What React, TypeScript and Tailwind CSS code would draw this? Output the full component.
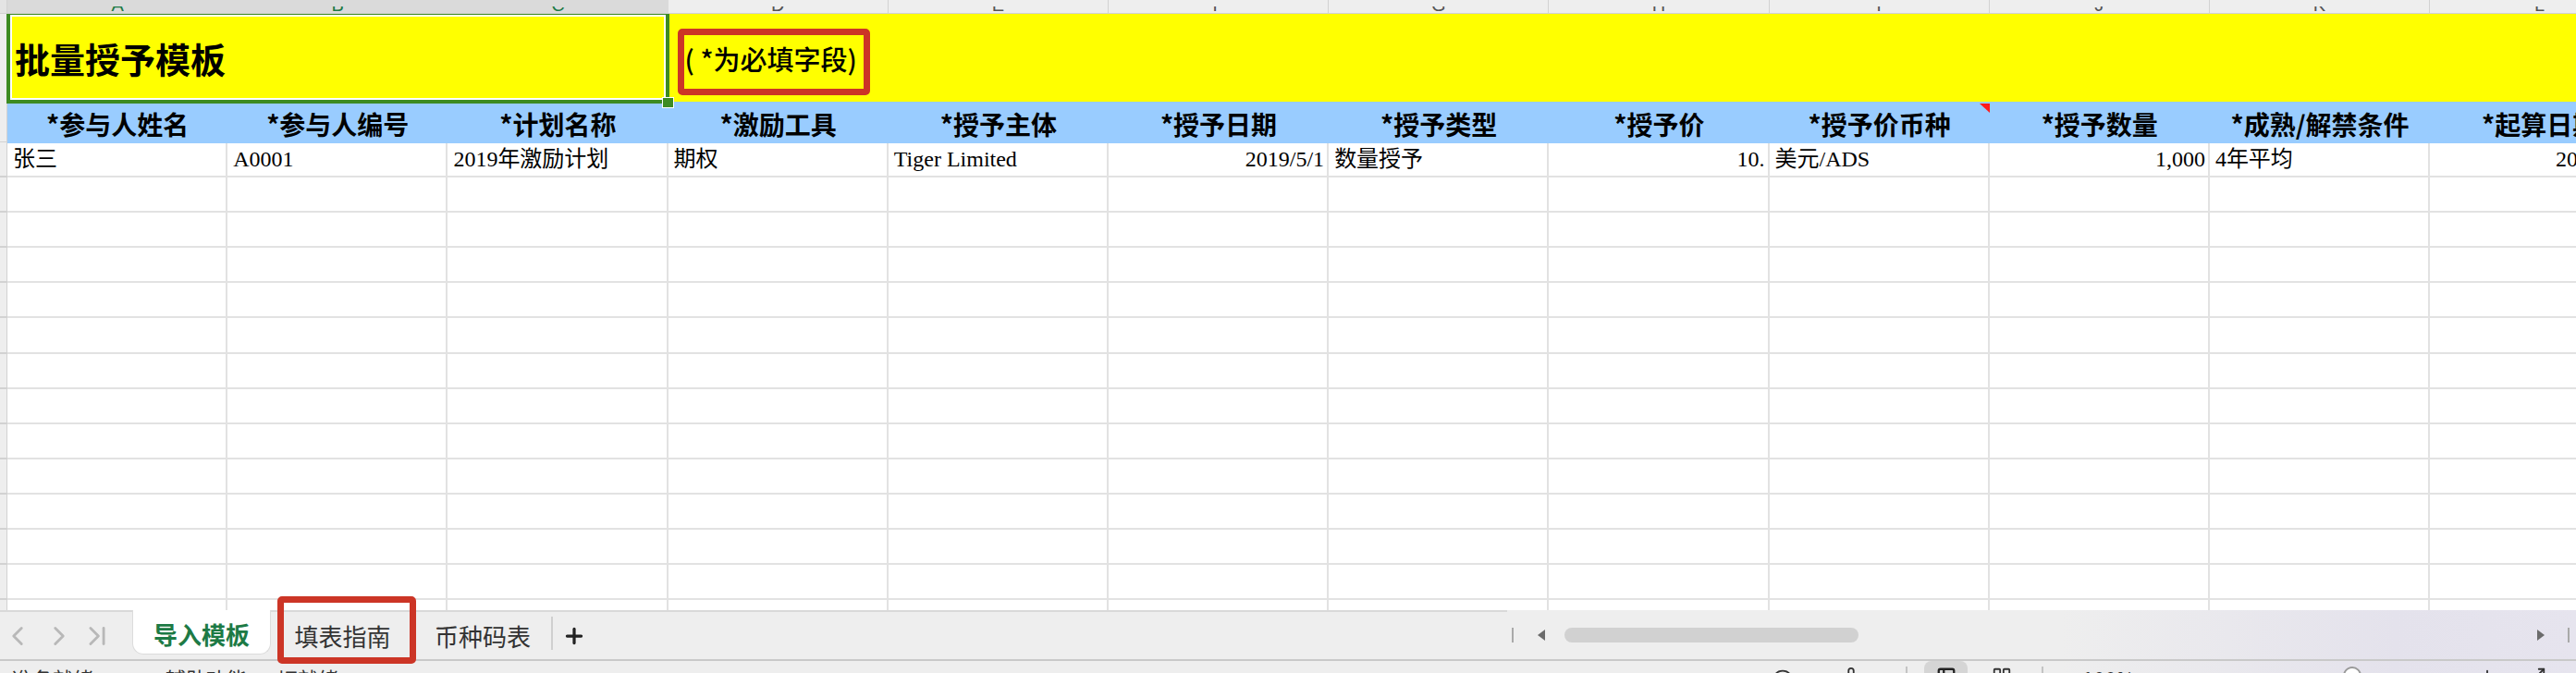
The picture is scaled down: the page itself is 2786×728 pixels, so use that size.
import { ChevronLeft, ChevronRight, ChevronLast, Plus, Eye, Mic, LayoutGrid, Table2, Maximize2 } from "lucide-react";

// sheet grid: narrow row-number strip + 12 columns
const GRID = "grid grid-cols-[8px_repeat(12,238.2px)]";
const LETTERS = ["A", "B", "C", "D", "E", "F", "G", "H", "I", "J", "K", "L"];

const HEADERS = [
  "*参与人姓名",
  "*参与人编号",
  "*计划名称",
  "*激励工具",
  "*授予主体",
  "*授予日期",
  "*授予类型",
  "*授予价",
  "*授予价币种",
  "*授予数量",
  "*成熟/解禁条件",
  "*起算日期",
];

type Cell = { text: string; right?: boolean };

const SAMPLE: Cell[] = [
  { text: "张三" },
  { text: "A0001" },
  { text: "2019年激励计划" },
  { text: "期权" },
  { text: "Tiger Limited" },
  { text: "2019/5/1", right: true },
  { text: "数量授予" },
  { text: "10.", right: true },
  { text: "美元/ADS" },
  { text: "1,000", right: true },
  { text: "4年平均" },
  { text: "2019/5/31", right: true },
];

const sans = "font-['Noto_Sans_CJK_SC','Noto_Sans',sans-serif]";
const serif = "font-['Liberation_Serif','Noto_Sans_CJK_SC',serif]";

function ColumnBar() {
  return (
    <div className={`${GRID} h-[15px] border-b border-[#d2d2d2] bg-[#eeeeee] overflow-hidden`}>
      <div className="bg-[#e4e4e4] border-r border-[#d2d2d2]" />
      {LETTERS.map((l, i) => (
        <div
          key={l}
          className={
            i < 3
              ? "bg-[#dadada] flex justify-center pt-[7px]"
              : "border-r border-[#d2d2d2] flex justify-center pt-[7px]"
          }
        >
          {/* only the feet of the column letters show under the cropped top edge */}
          <div className="h-[5px] overflow-hidden flex items-end">
            <span
              className={`font-['Liberation_Sans',sans-serif] text-[20px] leading-none -mb-[3px] ${
                i < 3 ? "text-[#1d7a45]" : "text-[#555555]"
              }`}
            >
              {l}
            </span>
          </div>
        </div>
      ))}
    </div>
  );
}

function DataRow({ cells }: { cells?: Cell[] }) {
  return (
    <div className={`${GRID} h-[38.1px] shrink-0`}>
      <div className="bg-[#eeeeee] border-r border-b-2 border-[#d2d2d2]" />
      {LETTERS.map((l, i) => {
        const c = cells?.[i];
        return (
          <div
            key={l}
            className={`border-r-2 border-b-2 border-[#e2e2e2] flex items-center overflow-hidden whitespace-nowrap ${serif} text-[24px] text-black ${
              c?.right ? "justify-end pr-[3px]" : "pl-[6px]"
            }`}
          >
            {c?.text}
          </div>
        );
      })}
    </div>
  );
}

function SheetTabs() {
  return (
    <div className="h-[53px] flex bg-[linear-gradient(to_right,#eeeeee_0%,#eeeeee_80%,#e4e2ec_93%,#e6e4ee_100%)] relative z-20">
      <div className="w-[1630px] flex items-start border-t-2 border-[#d9d9d9]">
        {/* sheet navigation */}
        <div className="w-[143px] h-[51px] flex items-center text-[#b8b8b8]">
          <ChevronLeft size={34} strokeWidth={2} className="ml-[2px]" />
          <ChevronRight size={34} strokeWidth={2} className="ml-[11px]" />
          <ChevronLast size={34} strokeWidth={2} className="ml-[7px]" />
        </div>

        {/* active sheet */}
        <div
          className={`-mt-[2px] h-[48px] w-[150px] bg-white rounded-b-[12px] border border-t-0 border-[#dcdcdc] flex items-center justify-center pt-[4px] ${sans} text-[26px] font-bold text-[#1d7a45]`}
        >
          导入模板
        </div>

        <div className={`relative h-[51px] w-[155px] flex items-center justify-center ${sans} text-[26px] text-[#333333]`}>
          填表指南
          <div className="absolute -top-[17px] left-[7px] -right-[2px] -bottom-[5px] border-[7px] border-[#cc3526] rounded-[5px] z-30" />
        </div>

        <div className={`h-[51px] w-[148px] flex items-center justify-center ${sans} text-[26px] text-[#333333]`}>
          币种码表
        </div>
        <div className="mt-[5px] w-[2px] h-[36px] bg-[#cfcfcf]" />
        <div className="h-[51px] flex items-center ml-[10px] text-[#222222]">
          <Plus size={26} strokeWidth={3} />
        </div>
      </div>

      {/* horizontal scrollbar */}
      <div className="flex-1 flex items-center">
        <div className="ml-[5px] w-[2px] h-[16px] bg-[#a9a9a9]" />
        <svg width="8" height="12" viewBox="0 0 8 12" className="ml-[26px]">
          <polygon points="8,0 8,12 0,6" fill="#6b6b6b" />
        </svg>
        <div className="ml-[21px] w-[318px] h-[16px] rounded-full bg-[#d1d1d1]" />
        <div className="flex-1" />
        <svg width="8" height="12" viewBox="0 0 8 12">
          <polygon points="0,0 0,12 8,6" fill="#6b6b6b" />
        </svg>
        <div className="ml-[25px] w-[2px] h-[16px] bg-[#a9a9a9]" />
        <div className="w-[7px]" />
      </div>
    </div>
  );
}

function StatusBar() {
  return (
    <div
      className={`h-[15px] border-t-2 border-[#c9c9c9] overflow-hidden flex bg-[linear-gradient(to_right,#eeeeee_0%,#eeeeee_80%,#e4e2ec_93%,#e6e4ee_100%)] ${sans} text-[22px] leading-none text-[#333333]`}
    >
      <div className="w-[1915px] flex items-start">
        <span className="ml-[13px] pt-[7px]">准备就绪</span>
        <span className="ml-[78px] pt-[7px]">辅助功能: 一切就绪</span>
      </div>
      <Eye size={22} className="mt-[6px] ml-[2px]" />
      <Mic size={22} className="mt-[6px] ml-[52px]" />
      <div className="mt-[6px] ml-[48px] w-[2px] h-[20px] bg-[#c4c4c4]" />
      <div className="ml-[18px] w-[47px] h-[20px] rounded-t-[8px] bg-[#d5d5d5] flex justify-center">
        <Table2 size={22} strokeWidth={2.5} className="mt-[6px] text-[#222222]" />
      </div>
      <LayoutGrid size={22} className="mt-[6px] ml-[26px]" />
      <div className="mt-[6px] ml-[32px] w-[2px] h-[20px] bg-[#c4c4c4]" />
      <span className="ml-[42px] pt-[7px]">100%</span>
      <div className="ml-[225px] mt-[6px] w-[20px] h-[20px] rounded-full bg-white border-2 border-[#9a9a9a]" />
      <Plus size={22} className="mt-[6px] ml-[125px]" />
      <Maximize2 size={22} className="mt-[6px] ml-[31px]" />
    </div>
  );
}

export default function App() {
  return (
    <div className="w-[2786px] h-[728px] overflow-hidden flex flex-col bg-white">
      <ColumnBar />

      <div className="h-[645px] overflow-hidden flex flex-col">
        {/* row 1: title */}
        <div className={`${GRID} h-[95px] shrink-0`}>
          <div className="bg-[#eeeeee] border-r border-[#d2d2d2]" />
          <div className="col-span-3 bg-[#ffff00] relative flex items-center pl-[8px]">
            <span className={`${sans} text-[38px] font-bold text-black leading-none`}>批量授予模板</span>
            {/* selection outline */}
            <div className="absolute -top-[3px] -left-[1px] -right-[1px] -bottom-[2px] border-[4px] border-[#3d8b22] shadow-[inset_0_0_0_2px_#ffffff] z-10 pointer-events-none" />
            <div className="absolute -right-[6px] -bottom-[7px] w-[13px] h-[12px] bg-[#3d8b22] border border-white z-20" />
          </div>
          <div className="bg-[#ffff00] pt-[16px] pl-[10px]">
            <div className="w-[208px] h-[72px] border-[7px] border-[#cc3526] rounded-[5px] flex items-center pb-[8px] pl-[1px]">
              <span className={`${sans} text-[29px] font-medium text-black whitespace-nowrap leading-none`}>
                ( *为必填字段)
              </span>
            </div>
          </div>
          <div className="col-span-8 bg-[#ffff00]" />
        </div>

        {/* row 2: field headers */}
        <div className={`${GRID} h-[44px] shrink-0`}>
          <div className="bg-[#eeeeee] border-r border-b-2 border-[#d2d2d2]" />
          {HEADERS.map((h, i) => (
            <div
              key={h}
              className={`bg-[#99ccff] flex items-center justify-center pt-[3px] whitespace-nowrap ${sans} text-[28px] font-bold text-black relative`}
            >
              {h}
              {i === 8 && (
                <svg width="11" height="10" viewBox="0 0 11 10" className="absolute top-[2px] right-0">
                  <polygon points="0,0 11,0 11,10" fill="#ff1a1a" />
                </svg>
              )}
            </div>
          ))}
        </div>

        <DataRow cells={SAMPLE} />
        {Array.from({ length: 14 }).map((_, i) => (
          <DataRow key={i} />
        ))}
      </div>

      <SheetTabs />
      <StatusBar />
    </div>
  );
}
